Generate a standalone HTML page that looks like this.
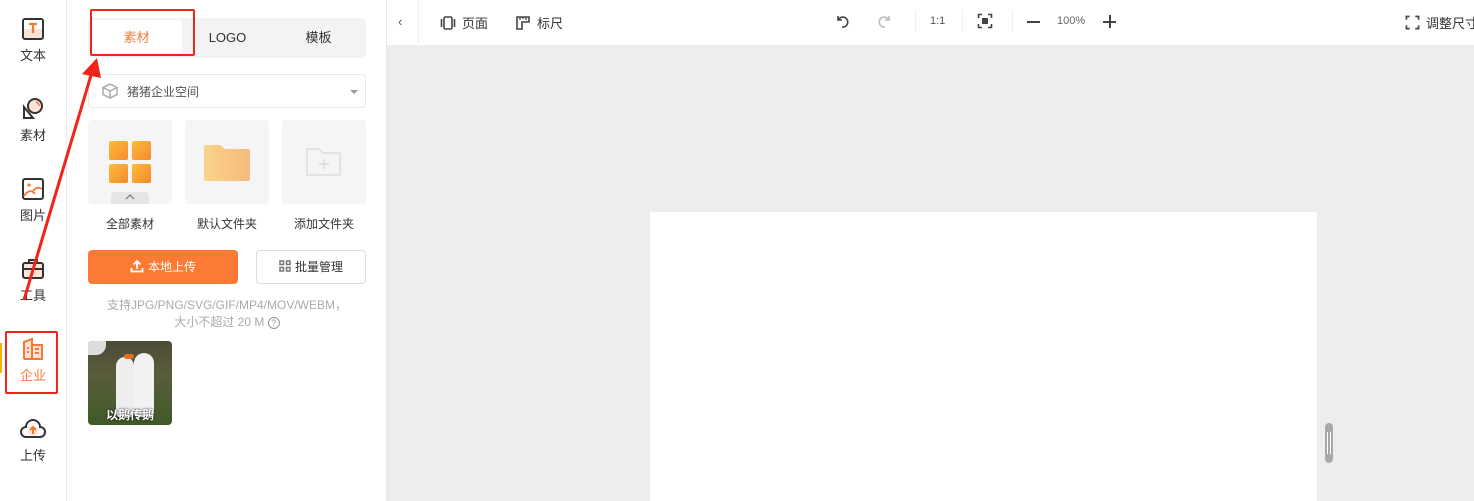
<!DOCTYPE html>
<html><head><meta charset="utf-8"><style>
*{margin:0;padding:0;box-sizing:border-box}
body{width:1474px;height:501px;overflow:hidden;background:#fff;font-family:"Liberation Sans","Noto Sans CJK SC",sans-serif;position:relative;color:#333}
.abs{position:absolute}
.nav{left:0;top:0;width:67px;height:501px;border-right:1px solid #ebebeb}
.ni{position:absolute;left:0;width:66px;text-align:center;font-size:13px;color:#333}
.ni div{margin-top:1px}
.panel{left:67px;top:0;width:320px;height:501px;border-right:1px solid #e8e8e8}
.tile{width:84px;height:84px;background:#f5f5f5;border-radius:4px;top:120px}
.lbl{top:215px;font-size:12px;color:#333;width:100px;text-align:center}
.tab{top:29px;width:91px;text-align:center;font-size:13px;line-height:18px;height:18px}
</style></head><body>
<div class="abs nav"></div>
<div class="ni" style="top:17px"><svg width="24" height="24" viewBox="0 0 24 24"><rect x="2" y="2" width="20" height="20" rx="2" fill="#fde3d5" stroke="#333" stroke-width="2"/><rect x="3" y="3" width="18" height="9" fill="#fff"/><path d="M8 7h8M12 7v9" stroke="#f47a35" stroke-width="2.2"/></svg><div>文本</div></div>
<div class="ni" style="top:97px"><svg width="24" height="24" viewBox="0 0 24 24"><path d="M3 10l9 11 -9 0z" fill="none" stroke="#333" stroke-width="2"/><circle cx="14" cy="9" r="7" fill="#fde3d5" stroke="#333" stroke-width="2"/><path d="M15 5a4 4 0 0 1 3 4" stroke="#f47a35" stroke-width="1.5" fill="none"/></svg><div>素材</div></div>
<div class="ni" style="top:177px"><svg width="24" height="24" viewBox="0 0 24 24"><rect x="2" y="2" width="20" height="20" rx="2" fill="#fff" stroke="#333" stroke-width="2"/><circle cx="8" cy="8" r="1.6" fill="#f47a35"/><path d="M3 19c4-6 8-6 11-2M12 14c3-4 6-4 9-2" stroke="#f47a35" stroke-width="1.8" fill="none"/></svg><div>图片</div></div>
<div class="ni" style="top:257px"><svg width="24" height="24" viewBox="0 0 24 24"><rect x="2" y="6" width="20" height="15" rx="2" fill="#fde3d5" stroke="#333" stroke-width="2"/><path d="M8 6V3h8v3M2 12h20" stroke="#333" stroke-width="2" fill="none"/><path d="M12 10v4" stroke="#f47a35" stroke-width="2"/></svg><div>工具</div></div>
<div class="ni" style="top:337px;color:#f47a35"><svg width="24" height="24" viewBox="0 0 24 24"><path d="M3 22V5l8-3v20M11 8h10v14H3" fill="#fde3d5" stroke="#f47a35" stroke-width="2"/><path d="M6 11h2M6 15h2M14 12h4M14 16h4" stroke="#f47a35" stroke-width="2"/></svg><div>企业</div></div>
<div class="abs" style="left:0;top:343px;width:2px;height:30px;background:#f7b500"></div>
<div class="ni" style="top:417px"><svg width="28" height="24" viewBox="0 0 28 24"><path d="M7 20a5 5 0 0 1 0-10 7 7 0 0 1 14 0 5 5 0 0 1 0 10z" fill="#fff" stroke="#333" stroke-width="2"/><circle cx="14" cy="14" r="5" fill="#fde3d5"/><path d="M14 17v-6M11 13l3-3 3 3" stroke="#f47a35" stroke-width="2" fill="none"/></svg><div>上传</div></div>

<div class="abs panel"></div>
<div class="abs" style="left:88px;top:18px;width:278px;height:40px;background:#f2f3f5;border-radius:5px"></div>
<div class="abs" style="left:91px;top:20px;width:91px;height:34px;background:#fff;border-radius:4px"></div>
<div class="abs tab" style="left:91px;color:#f47a35">素材</div>
<div class="abs tab" style="left:182px;color:#333">LOGO</div>
<div class="abs tab" style="left:273px;color:#333">模板</div>

<div class="abs" style="left:88px;top:74px;width:278px;height:34px;border:1px solid #e6e6e6;border-radius:4px"></div>
<svg class="abs" style="left:101px;top:82px" width="18" height="18" viewBox="0 0 18 18"><path d="M9 2l7 3.5v7L9 16 2 12.5v-7z M2 5.5L9 9l7-3.5M9 9v7" fill="none" stroke="#aaa" stroke-width="1.5"/></svg>
<div class="abs" style="left:127px;top:83px;font-size:12px;color:#555">猪猪企业空间</div>
<div class="abs" style="left:350px;top:90px;border:4px solid transparent;border-top:4px solid #999"></div>

<div class="abs tile" style="left:88px"></div>
<div class="abs tile" style="left:185px"></div>
<div class="abs tile" style="left:282px"></div>
<svg class="abs" style="left:108px;top:140px" width="44" height="44" viewBox="0 0 44 44"><defs><linearGradient id="g" x1="0" y1="0" x2="1" y2="1"><stop offset="0" stop-color="#fbbd3a"/><stop offset="1" stop-color="#f7882e"/></linearGradient></defs><rect x="1" y="1" width="19" height="19" rx="2" fill="url(#g)"/><rect x="24" y="1" width="19" height="19" rx="2" fill="url(#g)"/><rect x="1" y="24" width="19" height="19" rx="2" fill="url(#g)"/><rect x="24" y="24" width="19" height="19" rx="2" fill="url(#g)"/></svg>
<div class="abs" style="left:111px;top:192px;width:38px;height:12px;background:#e5e5e5;border-radius:4px 4px 0 0"></div>
<svg class="abs" style="left:125px;top:193px" width="10" height="8"><path d="M1 6l4-4 4 4" stroke="#888" stroke-width="1.5" fill="none"/></svg>
<svg class="abs" style="left:203px;top:144px" width="48" height="38" viewBox="0 0 48 38"><defs><linearGradient id="f" x1="0" x2="1"><stop offset="0" stop-color="#f8d487"/><stop offset="1" stop-color="#f7b97f"/></linearGradient></defs><path d="M1 3a2 2 0 0 1 2-2h14l5 4h23a2 2 0 0 1 2 2v28a2 2 0 0 1-2 2H3a2 2 0 0 1-2-2z" fill="url(#f)"/></svg>
<svg class="abs" style="left:306px;top:147px" width="36" height="30" viewBox="0 0 36 30"><path d="M1 2h12l4 4h17v22H1z" fill="none" stroke="#ddd" stroke-width="1.5"/><path d="M18 12v10M13 17h10" stroke="#ddd" stroke-width="1.5"/></svg>
<div class="abs lbl" style="left:80px">全部素材</div>
<div class="abs lbl" style="left:177px">默认文件夹</div>
<div class="abs lbl" style="left:274px">添加文件夹</div>

<div class="abs" style="left:88px;top:250px;width:150px;height:34px;background:#fd7a35;border-radius:4px;color:#fff;font-size:12px;text-align:center;line-height:34px"><svg width="14" height="14" viewBox="0 0 14 14" style="vertical-align:-2px;margin-right:4px"><path d="M7 10V2M3.5 5.5L7 2l3.5 3.5M1.5 9v3.5h11V9" stroke="#fff" stroke-width="1.8" fill="none"/></svg>本地上传</div>
<div class="abs" style="left:256px;top:250px;width:110px;height:34px;border:1px solid #ddd;border-radius:4px;font-size:12px;text-align:center;line-height:32px;color:#333"><svg width="12" height="12" viewBox="0 0 12 12" style="vertical-align:-1px;margin-right:4px"><g fill="none" stroke="#777" stroke-width="1.5"><rect x="1" y="1" width="3.5" height="3.5"/><rect x="7.5" y="1" width="3.5" height="3.5"/><rect x="1" y="7.5" width="3.5" height="3.5"/><rect x="7.5" y="7.5" width="3.5" height="3.5"/></g></svg>批量管理</div>
<div class="abs" style="left:88px;top:297px;width:278px;text-align:center;font-size:12px;color:#aaa;line-height:17px">支持JPG/PNG/SVG/GIF/MP4/MOV/WEBM，<br>大小不超过 20 M <span style="display:inline-block;width:12px;height:12px;border:1px solid #999;border-radius:50%;font-size:9px;line-height:10px;color:#999">?</span></div>

<div class="abs" style="left:88px;top:341px;width:84px;height:84px;border-radius:4px;overflow:hidden;background:linear-gradient(#4b4a37 0%,#5a5d3b 40%,#3f5a28 100%)">
<div class="abs" style="left:0;top:0;width:18px;height:14px;background:#ddd;border-radius:0 0 10px 0"></div>
<div class="abs" style="left:28px;top:16px;width:18px;height:60px;background:#eee;border-radius:9px 9px 4px 4px"></div>
<div class="abs" style="left:46px;top:12px;width:20px;height:64px;background:#f2f2f2;border-radius:10px 10px 4px 4px"></div>
<div class="abs" style="left:36px;top:13px;width:10px;height:5px;background:#e07020;border-radius:3px"></div>
<div class="abs" style="left:0;top:65px;width:84px;text-align:center;color:#fff;font-size:12px;font-weight:bold;text-shadow:0 0 2px #000">以鹅传鹅</div>
</div>

<div class="abs" style="left:387px;top:45px;width:1087px;height:456px;background:#ededed"></div>
<div class="abs" style="left:418px;top:0;width:1px;height:44px;background:#eee"></div>
<div class="abs" style="left:398px;top:14px;font-size:13px;color:#555">‹</div>
<div class="abs" style="left:440px;top:13px;font-size:13px;color:#333;display:flex;gap:6px;align-items:center"><svg width="16" height="16" viewBox="0 0 16 16"><rect x="4" y="2" width="8" height="12" rx="1.5" fill="none" stroke="#444" stroke-width="1.6"/><path d="M1.5 4v8M14.5 4v8" stroke="#444" stroke-width="1.6"/></svg>页面</div>
<div class="abs" style="left:515px;top:13px;font-size:13px;color:#333;display:flex;gap:6px;align-items:center"><svg width="16" height="16" viewBox="0 0 16 16"><path d="M2 2h12v5H7v7H2z" fill="none" stroke="#444" stroke-width="1.6"/><path d="M5 2v3M8 2v2M11 2v3" stroke="#444" stroke-width="1.3"/></svg>标尺</div>
<svg class="abs" style="left:834px;top:13px" width="16" height="16" viewBox="0 0 16 16"><path d="M4 3v4h4M4.5 6.5A5 5 0 1 1 8 14" fill="none" stroke="#444" stroke-width="1.6"/></svg>
<svg class="abs" style="left:877px;top:13px" width="16" height="16" viewBox="0 0 16 16"><path d="M12 3v4H8M11.5 6.5A5 5 0 1 0 8 14" fill="none" stroke="#bbb" stroke-width="1.6"/></svg>
<div class="abs" style="left:915px;top:10px;width:1px;height:22px;background:#eee"></div>
<div class="abs" style="left:930px;top:15px;font-size:11px;color:#555">1:1</div>
<div class="abs" style="left:962px;top:10px;width:1px;height:22px;background:#eee"></div>
<svg class="abs" style="left:977px;top:13px" width="16" height="16" viewBox="0 0 16 16"><path d="M1.5 5V1.5H5M11 1.5h3.5V5M14.5 11v3.5H11M5 14.5H1.5V11" fill="none" stroke="#444" stroke-width="1.6"/><rect x="5" y="5" width="6" height="6" fill="#444"/></svg>
<div class="abs" style="left:1012px;top:10px;width:1px;height:22px;background:#eee"></div>
<div class="abs" style="left:1027px;top:21px;width:13px;height:2px;background:#444"></div>
<div class="abs" style="left:1057px;top:15px;font-size:11px;color:#666">100%</div>
<div class="abs" style="left:1103px;top:21px;width:13px;height:2px;background:#444"></div>
<div class="abs" style="left:1108.5px;top:15px;width:2px;height:13px;background:#444"></div>
<div class="abs" style="left:1405px;top:13px;font-size:13px;color:#333;display:flex;gap:6px;align-items:center;white-space:nowrap"><svg width="15" height="15" viewBox="0 0 16 16"><path d="M1.5 5V1.5H5M11 1.5h3.5V5M14.5 11v3.5H11M5 14.5H1.5V11" fill="none" stroke="#444" stroke-width="1.8"/></svg>调整尺寸</div>

<div class="abs" style="left:650px;top:212px;width:667px;height:289px;background:#fff"></div>
<div class="abs" style="left:1325px;top:423px;width:8px;height:40px;background:#a8a8a8;border-radius:4px"></div>
<div class="abs" style="left:1327px;top:432px;width:4px;height:22px;border-left:1px solid #fff;border-right:1px solid #fff"></div>

<div class="abs" style="left:90px;top:9px;width:105px;height:47px;border:2px solid #f2231b;border-radius:2px"></div>
<div class="abs" style="left:5px;top:331px;width:53px;height:63px;border:2px solid #f2231b;border-radius:2px"></div>
<svg class="abs" style="left:0;top:0" width="120" height="310"><path d="M24 300L92 72" stroke="#f2231b" stroke-width="3"/><path d="M97 58L82 74 101 78z" fill="#f2231b"/></svg>
</body></html>
